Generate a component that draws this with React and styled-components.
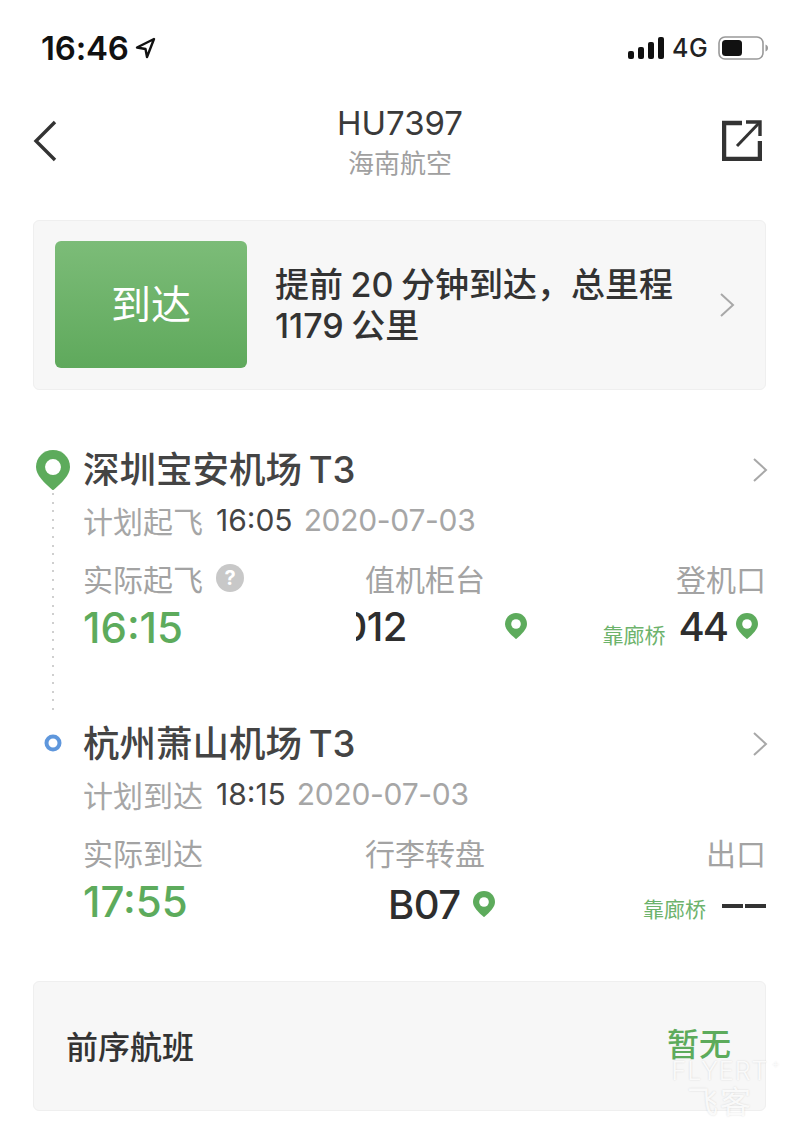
import React from 'react'
import styled, { createGlobalStyle } from 'styled-components'

const GlobalStyle = createGlobalStyle`
  html, body {
    margin: 0;
    padding: 0;
    background: #fff;
    font-family: Inter, "Noto Sans CJK SC", sans-serif;
  }
  * { box-sizing: border-box; }
`

const GREEN = '#5dab5c'

const Page = styled.div`
  position: relative;
  width: 800px;
  height: 1130px;
  overflow: hidden;
  background: #fff;
  color: #333;
`

const StatusBar = styled.div`
  height: 100px;
  padding: 29px 31px 0 41px;
  display: flex;
  justify-content: space-between;
  align-items: flex-start;
`
const StatusSide = styled.div`
  height: 38px;
  display: flex;
  align-items: center;
  gap: ${(p) => p.$gap || 6}px;
`
const Clock = styled.span`
  font-size: 33px;
  font-weight: 600;
  color: #111;
  letter-spacing: -0.2px;
`
const Signal = styled.svg`
  margin-right: -3px;
`
const Network = styled.span`
  font-size: 25px;
  font-weight: 500;
  color: #222;
  letter-spacing: 0.4px;
`

const NavBar = styled.div`
  height: 120px;
  padding: 0 38px 0 32px;
  display: flex;
  justify-content: space-between;
  align-items: flex-start;
`
const NavIcon = styled.div`
  width: 40px;
  margin-top: ${(p) => p.$top}px;
  display: flex;
`
const NavTitle = styled.div`
  margin-left: 6px;
  margin-top: 1px;
  display: flex;
  flex-direction: column;
  align-items: center;
`
const FlightNo = styled.div`
  font-size: 33px;
  line-height: 44px;
  color: #3a3a3a;
`
const Airline = styled.div`
  font-size: 26px;
  line-height: 38px;
  color: #a0a0a0;
`

const Card = styled.div`
  margin: 0 34px 0 33px;
  background: #f7f7f7;
  border: 1px solid #efefef;
  border-radius: 6px;
  display: flex;
  align-items: center;
`
const StatusCard = styled(Card)`
  height: 170px;
  padding: 0 29px 0 21px;
`
const StatusBadge = styled.div`
  width: 192px;
  height: 127px;
  margin-bottom: 1px;
  padding-bottom: 6px;
  border-radius: 6px;
  background: linear-gradient(#7cbc78, #5fa95c);
  color: #fff;
  font-size: 40px;
  display: flex;
  align-items: center;
  justify-content: center;
`
const StatusText = styled.div`
  flex: 1;
  margin-left: 28px;
  font-size: 34px;
  font-weight: 500;
  line-height: 41px;
  word-spacing: -1.5px;
  color: #333;
`

const Timeline = styled.div`
  margin-top: 57px;
  padding: 0 33px;
`
const Stop = styled.div`
  display: flex;
  height: ${(p) => p.$height}px;
`
const Rail = styled.div`
  width: 50px;
  flex: none;
  display: flex;
  flex-direction: column;
  align-items: flex-start;
`
const PinSlot = styled.div`
  display: flex;
  margin: 3px 0 0 3px;
`
const DottedLine = styled.div`
  flex: 1;
  width: 2px;
  margin: 3px 0 4px 19px;
  background: repeating-linear-gradient(#cfcfcf 0 2px, transparent 2px 8.6px);
`
const StopBody = styled.div`
  flex: 1;
  min-width: 0;
`
const StopHead = styled.div`
  height: 46px;
  display: flex;
  align-items: center;
  justify-content: space-between;
  margin-right: -2px;
`
const StopName = styled.div`
  margin-bottom: 6px;
  font-size: 36.5px;
  font-weight: 500;
  word-spacing: -3px;
  color: #444;
`
const Planned = styled.div`
  margin-top: 7px;
  height: 40px;
  display: flex;
  align-items: center;
  gap: 13px;
  font-size: 30px;
  color: #a6a6a6;
  white-space: nowrap;
`
const PlannedTime = styled.span`
  color: #444;
`
const PlannedDate = styled.span`
  margin-left: -2px;
  letter-spacing: -0.3px;
`
const Columns = styled.div`
  margin-top: 16px;
  display: grid;
  grid-template-columns: 282px 1fr auto;
`
const Column = styled.div`
  display: flex;
  flex-direction: column;
  align-items: ${(p) => (p.$right ? 'flex-end' : 'flex-start')};
  padding-right: ${(p) => (p.$right ? 1 : 0)}px;
`
const Label = styled.div`
  height: 44px;
  display: flex;
  align-items: center;
  gap: 13px;
  font-size: 30px;
  color: #a3a3a3;
  white-space: nowrap;
`
const Help = styled.span`
  width: 28px;
  height: 28px;
  border-radius: 50%;
  background: #c8c8c8;
  color: #fff;
  font-size: 20px;
  font-weight: 700;
  display: flex;
  align-items: center;
  justify-content: center;
`
const ValueRow = styled.div`
  height: 52px;
  display: flex;
  align-items: center;
  gap: ${(p) => p.$gap || 0}px;
  margin-left: ${(p) => p.$left || 0}px;
  margin-right: ${(p) => p.$right || 0}px;
  margin-top: ${(p) => p.$shift || 0}px;
`
const Time = styled.div`
  margin-top: 2px;
  font-size: 42px;
  font-weight: 500;
  color: ${GREEN};
`
const Code = styled.div`
  font-size: 40px;
  font-weight: 500;
  letter-spacing: -0.5px;
  color: #2e2e2e;
`
const GateCode = styled(Code)`
  letter-spacing: -2px;
`
const ClippedCode = styled(Code)`
  width: 51px;
  margin-left: -9px;
  margin-right: 98px;
  overflow: hidden;
  display: flex;
  justify-content: flex-end;
`
const Bridge = styled.span`
  margin: 16px 4px 0 0;
  font-size: 21px;
  color: #6db36c;
  white-space: nowrap;
`
const Dashes = styled.span`
  margin: 12px 0 0 3px;
  display: flex;
  gap: 2px;
`
const Dash = styled.span`
  width: 21px;
  height: 4px;
  background: #333;
`

const PrevCard = styled(Card)`
  height: 130px;
  padding: 0 34px 0 32px;
  justify-content: space-between;
`
const PrevLabel = styled.div`
  margin-bottom: 3px;
  font-size: 32px;
  font-weight: 500;
  color: #333;
`
const PrevValue = styled.div`
  margin-bottom: 2px;
  font-size: 32px;
  line-height: 32px;
  font-weight: 500;
  color: ${GREEN};
`

const Watermark = styled.div`
  position: absolute;
  left: 660px;
  top: 1062px;
  width: 120px;
  display: flex;
  flex-direction: column;
  align-items: center;
  color: rgba(255, 255, 255, 0.85);
  text-shadow: 0 0 2px rgba(0, 0, 0, 0.14);
  pointer-events: none;
`
const WatermarkLatin = styled.div`
  position: relative;
  font-size: 25px;
  line-height: 18px;
  font-weight: 300;
  letter-spacing: 1px;
`
const WatermarkMark = styled.span`
  position: absolute;
  left: 100%;
  top: -5px;
  margin-left: 3px;
  font-size: 13px;
  line-height: 13px;
`
const WatermarkCjk = styled.div`
  margin-top: 7px;
  font-size: 31px;
  line-height: 30px;
  letter-spacing: 2px;
`

const Pin = ({ size = 22, hole = 7 }) => (
  <svg width={size} height={size * 1.19} viewBox="0 0 32 38">
    <path d="M16 0C7 0 0 7 0 16c0 8 8 15 16 22 8-7 16-14 16-22C32 7 25 0 16 0z" fill={GREEN} />
    <circle cx="16" cy="16" r={hole} fill="#fff" />
  </svg>
)

const Chevron = () => (
  <svg width="18" height="26" viewBox="0 0 18 26" fill="none" stroke="#a8a8a8" strokeWidth="2">
    <path d="M3 2l12 11L3 24" />
  </svg>
)

const BlueDot = () => (
  <svg width="40" height="46" viewBox="0 0 40 46" fill="none">
    <circle cx="20" cy="22" r="6.5" stroke="#5f97dc" strokeWidth="4" />
  </svg>
)

const App = () => {
  return (
    <>
      <GlobalStyle />
      <Page>
        <StatusBar>
          <StatusSide>
            <Clock>16:46</Clock>
            <svg width="21" height="22" viewBox="0 0 21 22" fill="none" stroke="#111" strokeWidth="2.4" strokeLinejoin="round">
              <path d="M19 2L2 10.5l8.500 1.500 1.500 8z" />
            </svg>
          </StatusSide>
          <StatusSide $gap={10}>
            <Signal width="37" height="24" viewBox="0 0 37 24" fill="#111">
              <rect x="0" y="15" width="6" height="8" rx="2" />
              <rect x="10" y="11" width="6" height="12" rx="2" />
              <rect x="20" y="6" width="6" height="17" rx="2" />
              <rect x="30" y="1" width="6" height="22" rx="2" />
            </Signal>
            <Network>4G</Network>
            <svg width="51" height="24" viewBox="0 0 51 24" fill="none">
              <rect x="1" y="1" width="44" height="22" rx="6" stroke="#999" strokeWidth="1.6" />
              <rect x="4" y="4" width="20" height="16" rx="3.500" fill="#111" />
              <path d="M47.500 8.500c2 .7 2.500 2 2.500 3.500s-.5 2.800-2.500 3.500z" fill="#999" />
            </svg>
          </StatusSide>
        </StatusBar>

        <NavBar>
          <NavIcon $top={20}>
            <svg width="26" height="42" viewBox="0 0 26 42" fill="none" stroke="#333" strokeWidth="3.4">
              <path d="M23 2L4 21l19 19" />
            </svg>
          </NavIcon>
          <NavTitle>
            <FlightNo>HU7397</FlightNo>
            <Airline>海南航空</Airline>
          </NavTitle>
          <NavIcon $top={19}>
            <svg width="40" height="42" viewBox="0 0 40 42" fill="none" stroke="#333" strokeWidth="4.500">
              <path d="M20 4H2v36h36V22" />
              <path d="M24 3h14v14" strokeWidth="3.400" />
              <path d="M38 3L15 27" strokeWidth="3" />
            </svg>
          </NavIcon>
        </NavBar>

        <StatusCard>
          <StatusBadge>到达</StatusBadge>
          <StatusText>提前 20 分钟到达，总里程<br />1179 公里</StatusText>
          <Chevron />
        </StatusCard>

        <Timeline>
          <Stop $height={274}>
            <Rail>
              <PinSlot><Pin size={34} hole={7.500} /></PinSlot>
              <DottedLine />
            </Rail>
            <StopBody>
              <StopHead>
                <StopName>深圳宝安机场 T3</StopName>
                <Chevron />
              </StopHead>
              <Planned>计划起飞 <PlannedTime>16:05</PlannedTime> <PlannedDate>2020-07-03</PlannedDate></Planned>
              <Columns>
                <Column>
                  <Label>实际起飞 <Help>?</Help></Label>
                  <ValueRow><Time>16:15</Time></ValueRow>
                </Column>
                <Column>
                  <Label>值机柜台</Label>
                  <ValueRow>
                    <ClippedCode>0012</ClippedCode>
                    <Pin />
                  </ValueRow>
                </Column>
                <Column $right>
                  <Label>登机口</Label>
                  <ValueRow $gap={9} $right={8}>
                    <Bridge>靠廊桥</Bridge>
                    <GateCode>44</GateCode>
                    <Pin />
                  </ValueRow>
                </Column>
              </Columns>
            </StopBody>
          </Stop>
          <Stop $height={260}>
            <Rail><BlueDot /></Rail>
            <StopBody>
              <StopHead>
                <StopName>杭州萧山机场 T3</StopName>
                <Chevron />
              </StopHead>
              <Planned>计划到达 <PlannedTime>18:15</PlannedTime> <PlannedDate>2020-07-03</PlannedDate></Planned>
              <Columns>
                <Column>
                  <Label>实际到达</Label>
                  <ValueRow><Time>17:55</Time></ValueRow>
                </Column>
                <Column>
                  <Label>行李转盘</Label>
                  <ValueRow $gap={12} $left={23} $shift={4}>
                    <Code>B07</Code>
                    <Pin />
                  </ValueRow>
                </Column>
                <Column $right>
                  <Label>出口</Label>
                  <ValueRow $gap={9}>
                    <Bridge>靠廊桥</Bridge>
                    <Dashes>
                      <Dash />
                      <Dash />
                    </Dashes>
                  </ValueRow>
                </Column>
              </Columns>
            </StopBody>
          </Stop>
        </Timeline>

        <PrevCard>
          <PrevLabel>前序航班</PrevLabel>
          <PrevValue>暂无</PrevValue>
        </PrevCard>

        <Watermark>
          <WatermarkLatin>FLYERT<WatermarkMark>+</WatermarkMark></WatermarkLatin>
          <WatermarkCjk>飞客</WatermarkCjk>
        </Watermark>
      </Page>
    </>
  )
}

export default App
